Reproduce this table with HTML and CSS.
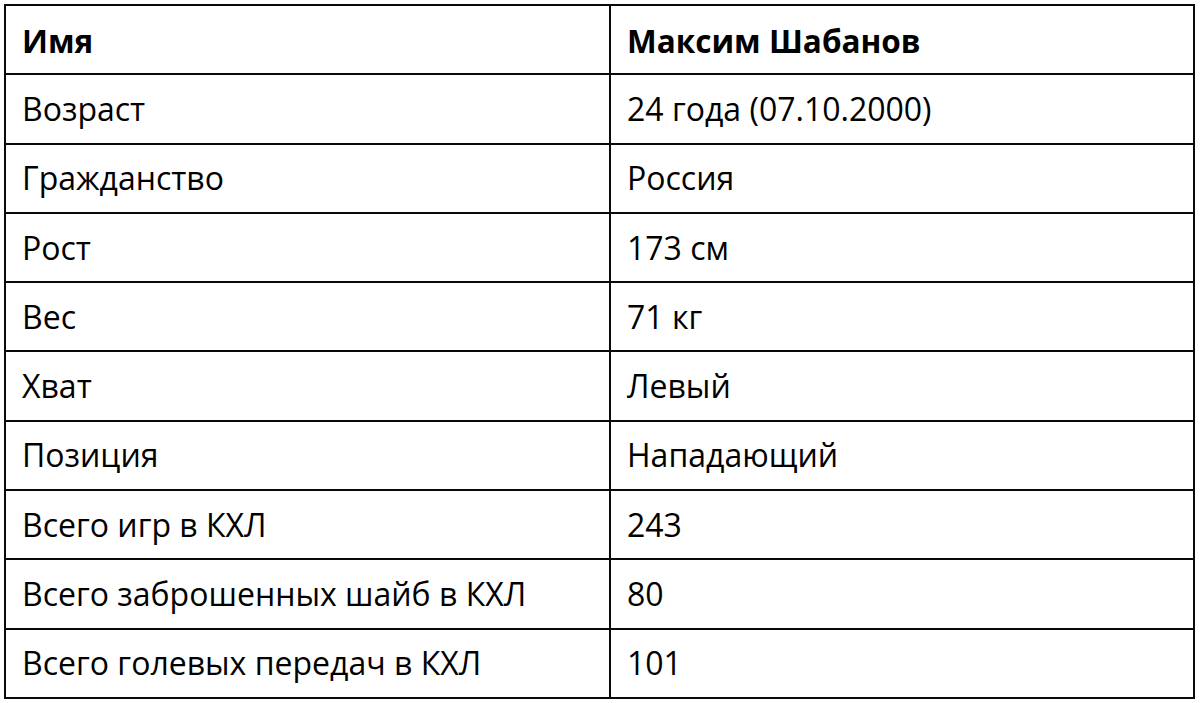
FILE: index.html
```html
<!DOCTYPE html>
<html lang="ru">
<head>
<meta charset="utf-8">
<link rel="stylesheet" href="styles.css">
</head>
<body>
<div class="page">
<table class="info">
<tr class="head"><td>Имя</td><td>Максим Шабанов</td></tr>
<tr><td>Возраст</td><td>24 года (07.10.2000)</td></tr>
<tr><td>Гражданство</td><td>Россия</td></tr>
<tr><td>Рост</td><td>173 см</td></tr>
<tr><td>Вес</td><td>71 кг</td></tr>
<tr><td>Хват</td><td>Левый</td></tr>
<tr><td>Позиция</td><td>Нападающий</td></tr>
<tr><td>Всего игр в КХЛ</td><td>243</td></tr>
<tr><td>Всего заброшенных шайб в КХЛ</td><td>80</td></tr>
<tr><td>Всего голевых передач в КХЛ</td><td>101</td></tr>
</table>
</div>
</body>
</html>
```

FILE: styles.css
```css
html, body {
  margin: 0;
  padding: 0;
  background: #fff;
}
.page {
  padding: 4px 5px 0 4px;
}
.info {
  border-collapse: collapse;
  width: 1191px;
  font-family: "Open Sans", "Liberation Sans", sans-serif;
  font-size: 32px;
  color: #000;
}
.info td {
  border: 2px solid #0a0a0a;
  height: 69.3px;
  padding: 0 0 0 16px;
  vertical-align: middle;
  line-height: 1;
  box-sizing: border-box;
}
.info td:first-child {
  width: 605px;
}
.info .head td {
  font-weight: 700;
  font-size: 31.5px;
  padding-top: 2px;
}
```
